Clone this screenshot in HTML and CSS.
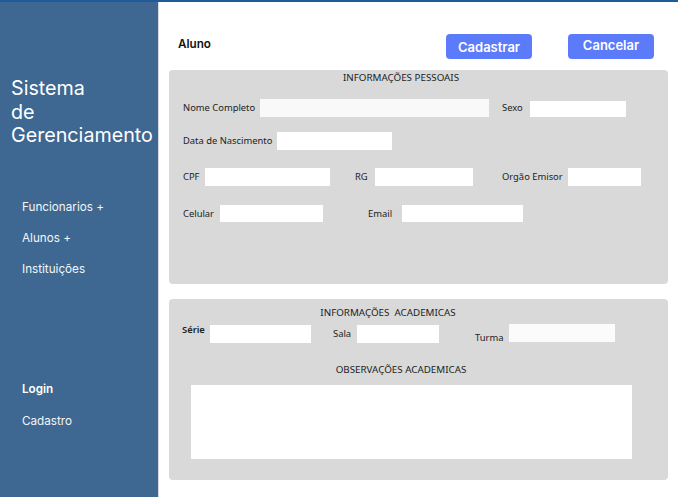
FILE: index.html
```html
<!DOCTYPE html>
<html lang="pt-BR">
<head>
<meta charset="utf-8">
<title>Sistema de Gerenciamento</title>
<link rel="stylesheet" href="styles.css">
</head>
<body>
<div class="app">
  <aside class="sidebar">
    <h1 class="brand">Sistema<br>de<br>Gerenciamento</h1>
    <nav class="nav nav-main">
      <a class="nav-item">Funcionarios +</a>
      <a class="nav-item">Alunos +</a>
      <a class="nav-item">Instituições</a>
    </nav>
    <nav class="nav nav-auth">
      <a class="nav-item strong">Login</a>
      <a class="nav-item">Cadastro</a>
    </nav>
  </aside>
  <main class="main">
    <header class="header">
      <span class="page-title">Aluno</span>
      <div class="actions">
        <button class="btn btn-primary">Cadastrar</button>
        <button class="btn btn-cancel">Cancelar</button>
      </div>
    </header>

    <section class="panel panel-personal">
      <h2 class="panel-title title-personal">INFORMAÇÕES PESSOAIS</h2>
      <div class="row row-1">
        <label class="lbl w-nome">Nome Completo</label><span class="inp inp-nome"></span>
        <label class="lbl w-sexo">Sexo</label><span class="inp inp-sexo"></span>
      </div>
      <div class="row row-2">
        <label class="lbl w-data">Data de Nascimento</label><span class="inp inp-data"></span>
      </div>
      <div class="row row-3">
        <label class="lbl w-cpf">CPF</label><span class="inp inp-cpf"></span>
        <label class="lbl w-rg">RG</label><span class="inp inp-rg"></span>
        <label class="lbl w-org">Orgão Emisor</label><span class="inp inp-org"></span>
      </div>
      <div class="row row-4">
        <label class="lbl w-cel">Celular</label><span class="inp inp-cel"></span>
        <label class="lbl w-email">Email</label><span class="inp inp-email"></span>
      </div>
    </section>

    <section class="panel panel-academic">
      <h2 class="panel-title title-academic">INFORMAÇÕES&nbsp; ACADEMICAS</h2>
      <div class="row row-acad">
        <label class="lbl w-serie serie">Série</label><span class="inp inp-serie"></span>
        <label class="lbl w-sala sala">Sala</label><span class="inp inp-sala"></span>
        <label class="lbl w-turma turma">Turma</label><span class="inp inp-turma"></span>
      </div>
      <h2 class="panel-title title-obs">OBSERVAÇÕES ACADEMICAS</h2>
      <div class="textarea"></div>
    </section>
  </main>
</div>
</body>
</html>
```

FILE: styles.css
```css
* { box-sizing: border-box; }

html, body {
  margin: 0;
  padding: 0;
  background: #ffffff;
}

body {
  border-top: 2px solid #1f5b98;
  font-family: "Noto Sans", "Open Sans", sans-serif;
  color: #222;
}

.app {
  display: flex;
  height: 495px;
  overflow: hidden;
}

/* Sidebar */
.sidebar {
  width: 159px;
  flex: none;
  background: #3e6891;
  border-right: 1px solid #d6dbe0;
  color: #fff;
  font-family: Inter, "Liberation Sans", sans-serif;
  padding-top: 75px;
}

.brand {
  margin: 0;
  padding-left: 11px;
  font-size: 19.7px;
  line-height: 23.5px;
  font-weight: 400;
  letter-spacing: 0;
}

.nav {
  display: flex;
  flex-direction: column;
  padding-left: 22px;
}

.nav-main {
  margin-top: 51px;
  gap: 15px;
}

.nav-auth {
  margin-top: 104px;
  gap: 16px;
}

.nav-item {
  font-size: 11.7px;
  line-height: 16px;
  color: #f4f6f8;
  font-weight: 400;
}

.nav-item.strong { font-weight: 600; color: #fff; }

/* Main */
.main {
  flex: 1;
  padding-left: 10px;
}

.header {
  display: flex;
  align-items: flex-start;
  height: 68px;
  padding-top: 32px;
  width: 499px;
  padding-right: 14px;
}

.page-title {
  margin-left: 9px;
  margin-top: 2px;
  font-family: Inter, "Liberation Sans", sans-serif;
  font-size: 11.7px;
  line-height: 16px;
  font-weight: 600;
  color: #111;
}

.actions {
  margin-left: auto;
  display: flex;
  gap: 36px;
}

.btn {
  width: 86px;
  height: 25px;
  border: none;
  border-radius: 4px;
  background: #5b7bfb;
  color: #fff;
  font-family: Inter, "Liberation Sans", sans-serif;
  font-size: 13px;
  font-weight: 600;
  padding: 0;
}

.btn-primary { padding-top: 1px; }
.btn-cancel { padding-bottom: 4px; }

.panel {
  width: 499px;
  background: #d9d9d9;
  border-radius: 4px;
}

.panel-personal {
  height: 214px;
  padding-top: 1px;
}

.panel-academic {
  height: 181px;
  margin-top: 15px;
  padding-top: 7px;
}

.panel-title {
  margin: 0;
  font-size: 9.8px;
  line-height: 14px;
  font-weight: 400;
  color: #222;
  text-align: center;
  white-space: nowrap;
}

.title-personal { padding-right: 35px; }
.title-academic { padding-right: 61px; }
.title-obs { padding-right: 35px; margin-top: 20px; }

.row {
  display: flex;
  align-items: center;
  height: 18px;
  padding-left: 14px;
}

.row-1 { margin-top: 14px; }
.row-2 { margin-top: 15px; }
.row-3 { margin-top: 18px; }
.row-4 { margin-top: 19px; height: 17px; }

.lbl {
  flex: none;
  font-size: 9.4px;
  line-height: 14px;
  color: #222;
  white-space: nowrap;
}

.inp {
  flex: none;
  display: block;
  height: 100%;
  background: #fff;
}

.w-nome { width: 77px; }
.inp-nome { width: 229px; background: #f9f9f9; }
.w-sexo { width: 28px; margin-left: 13px; }
.inp-sexo { width: 96px; height: 16px; align-self: flex-end; }

.w-data { width: 94px; }
.inp-data { width: 115px; }

.w-cpf { width: 22px; }
.inp-cpf { width: 125px; }
.w-rg { width: 20px; margin-left: 25px; }
.inp-rg { width: 98px; }
.w-org { width: 66px; margin-left: 29px; }
.inp-org { width: 73px; }

.w-cel { width: 37px; }
.inp-cel { width: 103px; }
.w-email { width: 34px; margin-left: 45px; }
.inp-email { width: 121px; }

.row-acad {
  margin-top: 4px;
  height: 19px;
  padding-left: 13px;
}

.w-serie { width: 28px; }
.serie { align-self: flex-start; font-weight: 600; margin-top: -1px; }
.inp-serie { width: 101px; height: 18px; align-self: flex-end; }
.w-sala { width: 24px; margin-left: 22px; }
.sala { margin-top: 1px; }
.inp-sala { width: 82px; height: 18px; align-self: flex-end; }
.w-turma { width: 34px; margin-left: 36px; }
.turma { align-self: flex-end; margin-bottom: -2px; }
.inp-turma { width: 106px; height: 18px; align-self: flex-start; background: #fbfbfb; }

.textarea {
  margin: 8px 0 0 22px;
  width: 441px;
  height: 74px;
  background: #fff;
}
```
